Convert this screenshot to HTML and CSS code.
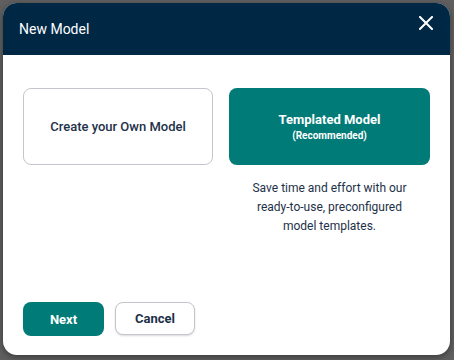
FILE: index.html
```html
<!DOCTYPE html>
<html>
<head>
<meta charset="utf-8">
<link rel="stylesheet" href="styles.css">
</head>
<body>
<div class="dialog">
  <div class="header">
    <span class="title">New Model</span>
    <svg class="close" width="14" height="14" viewBox="0 0 14 14"><path d="M1 1L13 13M13 1L1 13" stroke="#fff" stroke-width="2" stroke-linecap="square"/></svg>
  </div>
  <div class="body">
    <div class="options">
      <div class="col">
        <div class="card card-own">Create your Own Model</div>
      </div>
      <div class="col col-right">
        <div class="card card-tpl">
          <div class="tpl-title">Templated Model</div>
          <div class="tpl-sub">(Recommended)</div>
        </div>
        <p class="desc">Save time and effort with our ready-to-use, preconfigured model templates.</p>
      </div>
    </div>
    <div class="actions">
      <button class="btn btn-next">Next</button>
      <button class="btn btn-cancel">Cancel</button>
    </div>
  </div>
</div>
</body>
</html>
```
FILE: styles.css
```css
* { box-sizing: border-box; }
html, body { margin: 0; padding: 0; }
body {
  width: 454px;
  height: 360px;
  background: #5f5f5f;
  font-family: Roboto, "Noto Sans", sans-serif;
  padding: 3px 4px 5px 3px;
}
.dialog {
  width: 447px;
  height: 352px;
  background: #fff;
  border-radius: 14px;
  overflow: hidden;
  display: flex;
  flex-direction: column;
  box-shadow: 0 2px 6px rgba(0,0,0,0.4);
}
.header {
  height: 52px;
  background: #002845;
  display: flex;
  align-items: center;
  justify-content: space-between;
  padding: 0 16px 0 16px;
}
.title {
  color: #fff;
  font-size: 14px;
  font-weight: 400;
  margin-top: 0;
}
.close { margin-top: -12px; margin-right: 1px; }
.body {
  flex: 1;
  display: flex;
  flex-direction: column;
  padding: 33px 20px 19px 20px;
}
.options {
  display: flex;
  gap: 16px;
}
.col { display: flex; flex-direction: column; }
.col:first-child { width: 190px; }
.col-right { width: 201px; }
.card {
  height: 77px;
  border-radius: 8px;
  display: flex;
  flex-direction: column;
  align-items: center;
  justify-content: center;
}
.card-own {
  border: 1px solid #c3c6cc;
  color: #1d3148;
  font-size: 13px;
  font-weight: 500;
}
.card-tpl {
  background: #007b78;
  color: #fff;
}
.tpl-title { font-size: 13px; font-weight: 700; }
.tpl-sub { font-size: 10px; font-weight: 700; margin-top: 3px; }
.desc {
  margin: 14px 0 0 0;
  text-align: center;
  font-size: 12px;
  line-height: 19px;
  color: #1d3148;
  padding: 0 16px;
}
.actions {
  margin-top: auto;
  display: flex;
  gap: 11px;
}
.btn {
  height: 34px;
  border-radius: 8px;
  font-family: Roboto, "Noto Sans", sans-serif;
  font-size: 13px;
  font-weight: 700;
}
.btn-next {
  width: 81px;
  background: #007b78;
  color: #fff;
  border: none;
}
.btn-cancel {
  width: 80px;
  height: 33px;
  background: #fff;
  color: #1d3148;
  border: 1px solid #c3c6cc;
  box-shadow: 0 1px 2px rgba(0,0,0,0.15);
}
```
